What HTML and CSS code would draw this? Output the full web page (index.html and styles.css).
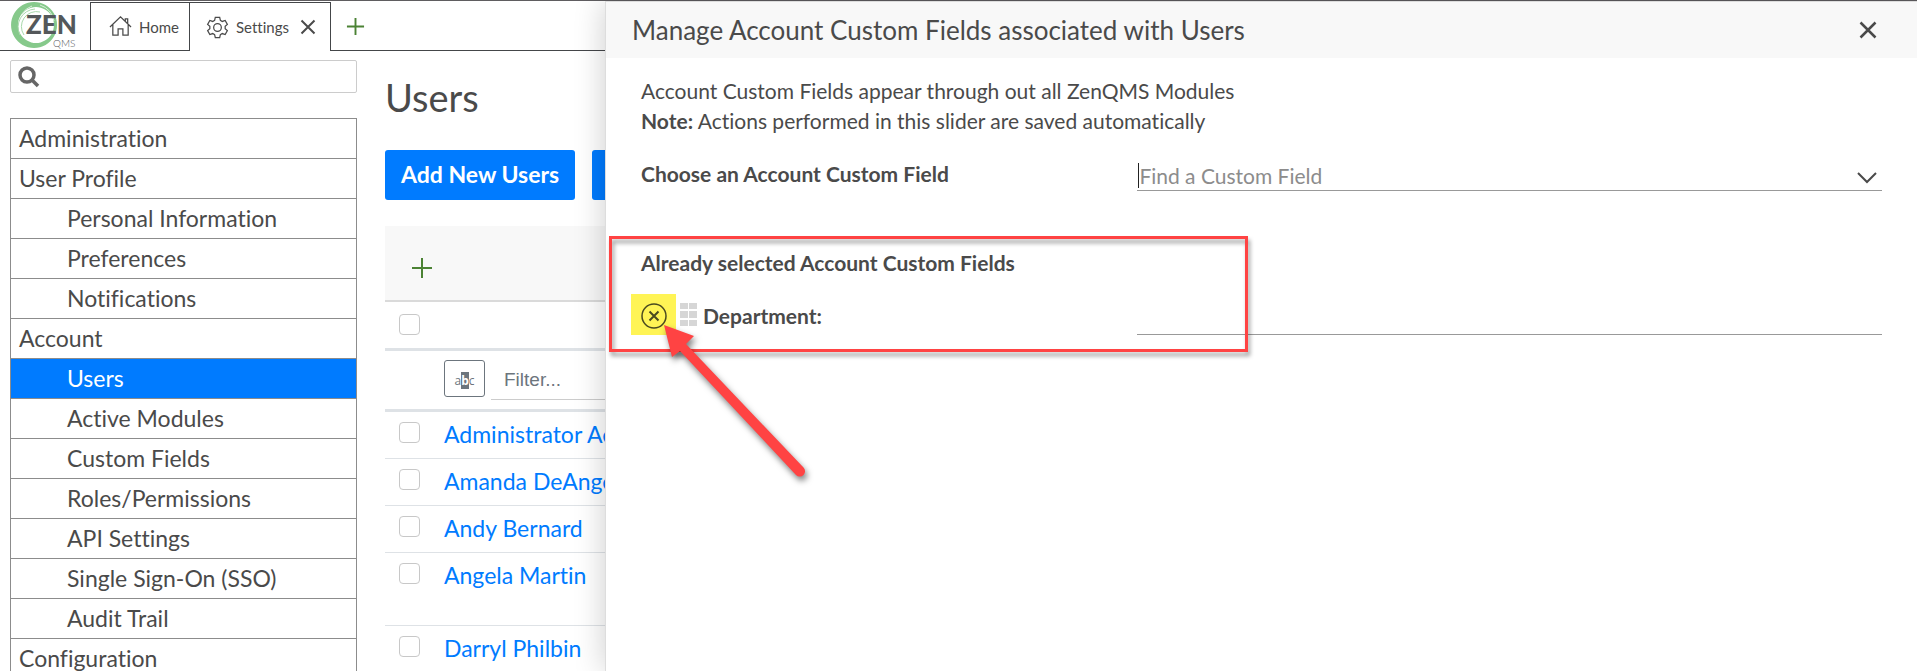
FILE: index.html
```
<!DOCTYPE html>
<html lang="en">
<head>
<meta charset="utf-8">
<title>ZenQMS - Users</title>
<link rel="stylesheet" href="styles.css">
</head>
<body>
<header class="topbar">
  <div class="brand">
    <svg class="logo" viewBox="0 0 68 49" role="img" aria-label="Zen QMS">
      <path fill="#86c98b" stroke="none" fill-rule="evenodd" d="M24 1a23 23 0 1 0 .1 0zM26 6a18 18 0 1 1-.1 0z"/>
      <path d="M10 34A18 18 0 0 1 25 8M14 34A15 15 0 0 1 30 11" fill="none" stroke="#a9d9ac" stroke-width="1"/>
      <path d="M30 4A21 21 0 0 1 44 20M12 13A19 19 0 0 1 22 5" fill="none" stroke="#d9efda" stroke-width="1"/>
      <text class="logo-zen" x="16" y="33">ZEN</text>
      <text class="logo-qms" x="43" y="46">QMS</text>
    </svg>
  </div>
  <nav class="tabs">
    <a class="tab" href="#home">
      <svg class="tab-icon" viewBox="0 0 24 24"><path d="M1 12.500 12 2l11 10.500M4 10v11h5.500v-6.500h5V21H20V10M17 6.500V4h2.500v5"/></svg>
      Home
    </a>
    <div class="tab tab-active">
      <svg class="tab-icon" viewBox="0 0 24 24"><circle cx="12" cy="12" r="4"/><path d="M9.700 1.500h4.600l.7 3 2 1.200 3-1 2.300 4-2.300 2.100v2.400l2.300 2.100-2.300 4-3-1-2 1.200-.7 3H9.700l-.7-3-2-1.200-3 1-2.300-4L4 13.200v-2.400L1.700 8.700l2.300-4 3 1 2-1.200z"/></svg>
      <span>Settings</span>
      <button class="icon-btn tab-close" aria-label="Close tab"><svg viewBox="0 0 16 16"><path d="M1.500 1.500l13 13M14.500 1.500l-13 13"/></svg></button>
    </div>
    <button class="icon-btn add-tab" aria-label="New tab"><svg viewBox="0 0 20 20"><path d="M10 1v18M1 10h18"/></svg></button>
  </nav>
</header>

<div class="layout">
  <aside class="sidebar">
    <label class="search">
      <svg viewBox="0 0 22 22"><circle cx="9" cy="9" r="7"/><path d="M14 14l6 6"/></svg>
      <input type="search" aria-label="Search">
    </label>
    <nav class="menu">
      <a href="#administration">Administration</a>
      <a href="#profile">User Profile</a>
      <a class="sub" href="#personal">Personal Information</a>
      <a class="sub" href="#preferences">Preferences</a>
      <a class="sub" href="#notifications">Notifications</a>
      <a href="#account">Account</a>
      <a class="sub current" href="#users">Users</a>
      <a class="sub" href="#modules">Active Modules</a>
      <a class="sub" href="#fields">Custom Fields</a>
      <a class="sub" href="#roles">Roles/Permissions</a>
      <a class="sub" href="#api">API Settings</a>
      <a class="sub" href="#sso">Single Sign-On (SSO)</a>
      <a class="sub" href="#audit">Audit Trail</a>
      <a href="#configuration">Configuration</a>
    </nav>
  </aside>

  <main class="content">
    <h1>Users</h1>
    <div class="actions">
      <button class="primary">Add New Users</button>
      <button class="primary" aria-label="More actions"></button>
    </div>
    <div class="toolbar">
      <button class="icon-btn add-row" aria-label="Add row"><svg viewBox="0 0 20 20"><path d="M10 0v20M0 10h20"/></svg></button>
    </div>
    <table class="users">
      <thead>
        <tr class="head-row"><th class="pick"><input type="checkbox" aria-label="Select all"></th><th></th></tr>
        <tr class="filter-row">
          <td></td>
          <td><div class="filter"><button class="match" aria-label="Match type">a<b>b</b>c</button><input type="text" placeholder="Filter..." aria-label="Filter by name"></div></td>
        </tr>
      </thead>
      <tbody>
        <tr><td class="pick"><input type="checkbox" aria-label="Select Administrator Account"></td><td><a href="#u1">Administrator Account</a></td></tr>
        <tr><td class="pick"><input type="checkbox" aria-label="Select Amanda DeAngelo"></td><td><a href="#u2">Amanda DeAngelo</a></td></tr>
        <tr><td class="pick"><input type="checkbox" aria-label="Select Andy Bernard"></td><td><a href="#u3">Andy Bernard</a></td></tr>
        <tr class="tall"><td class="pick"><input type="checkbox" aria-label="Select Angela Martin"></td><td><a href="#u4">Angela Martin</a></td></tr>
        <tr><td class="pick"><input type="checkbox" aria-label="Select Darryl Philbin"></td><td><a href="#u5">Darryl Philbin</a></td></tr>
      </tbody>
    </table>
  </main>
</div>

<section class="slider" role="dialog" aria-labelledby="slider-title">
  <header class="slider-head">
    <h2 id="slider-title">Manage Account Custom Fields associated with Users</h2>
    <button class="icon-btn slider-close" aria-label="Close"><svg viewBox="0 0 18 18"><path d="M1.500 1.500l15 15M16.500 1.500l-15 15"/></svg></button>
  </header>
  <div class="slider-body">
    <p class="intro">Account Custom Fields appear through out all ZenQMS Modules<br><b>Note:</b> Actions performed in this slider are saved automatically</p>
    <div class="field-row">
      <label for="find">Choose an Account Custom Field</label>
      <div class="combo">
        <span class="caret"></span>
        <input id="find" type="text" placeholder="Find a Custom Field">
        <button class="icon-btn chevron" aria-label="Show options"><svg viewBox="0 0 20 12"><path d="M1 1l9 9 9-9"/></svg></button>
      </div>
    </div>
    <h3>Already selected Account Custom Fields</h3>
    <div class="field-row selected">
      <div class="field-name">
        <button class="icon-btn remove" aria-label="Remove Department"><svg viewBox="0 0 26 26"><circle cx="13" cy="13" r="12"/><path d="M8.500 8.500l9 9M17.500 8.500l-9 9"/></svg></button>
        <svg class="grip" viewBox="0 0 17 23"><path d="M0 0h8v6H0zM9 0h8v6H9zM0 8h8v7H0zM9 8h8v7H9zM0 17h8v6H0zM9 17h8v6H9z"/></svg>
        <label for="dept">Department:</label>
      </div>
      <input id="dept" type="text">
    </div>
  </div>
  <div class="callout"></div>
  <svg class="arrow" viewBox="0 0 160 170"><path d="M10 10l30 11-8 8L149.500 152.500a5 5 0 0 1-7.500 7.500L26 36l-8 6z"/></svg>
</section>
</body>
</html>
```
FILE: styles.css
```
* { box-sizing: border-box; }
body {
  margin: 0;
  height: 100vh;
  overflow: hidden;
  position: relative;
  background: #fff;
  color: #4a4a4a;
  font: 23px/28px Lato, "Liberation Sans", sans-serif;
  font-variant-ligatures: no-common-ligatures;
}
h1, h2, h3, p { margin: 0; font-weight: 400; }
input, button { font: inherit; color: inherit; }
a { text-decoration: none; }
svg { display: block; fill: none; stroke: currentColor; }
.icon-btn { padding: 0; border: 0; background: none; }

.topbar { display: flex; height: 51px; border-top: 1px solid #5f5d60; }
.brand { width: 90px; padding-left: 10px; border-bottom: 1px solid #444649; }
.logo { width: 68px; height: 49px; }
.logo text { stroke: none; fill: #54585a; }
.logo-zen { font: 900 26px Lato, sans-serif; }
.logo-qms { font: 300 10px Lato, sans-serif; }
.tabs { flex: 1; display: flex; padding-top: 1px; }
.tab {
  display: flex;
  align-items: center;
  gap: 7px;
  padding: 0 10px 0 18px;
  border: 1px solid #444649;
  border-right: 0;
  color: inherit;
  font-size: 15px;
}
.tab-active { padding: 0 14px 0 16px; border-right: 1px solid #444649; border-bottom: 0; }
.tab-icon { width: 23px; height: 23px; stroke-width: 1.300; }
.tab-close { margin-left: 4px; }
.tab-close svg { width: 16px; height: 16px; stroke-width: 2; }
.add-tab { flex: 1; padding-left: 15px; border-bottom: 1px solid #444649; color: #4b8234; }
.add-tab svg { width: 19px; height: 19px; stroke-width: 2; }

.layout { display: grid; grid-template-columns: 347px 1fr; gap: 28px; padding: 9px 0 0 10px; }
.search {
  display: flex;
  align-items: center;
  height: 33px;
  margin-bottom: 25px;
  padding: 0 7px;
  border: 1px solid #ccc;
  border-radius: 2px;
}
.search svg { width: 22px; height: 22px; color: #666; stroke-width: 3.500; }
.search input { flex: 1; border: 0; outline: 0; background: none; }
.menu { border: 1px solid #8c8c8c; }
.menu a { display: block; height: 40px; padding: 5px 8px; border-bottom: 1px solid #8c8c8c; color: inherit; }
.menu .sub { padding-left: 56px; }
.menu .current { background: #007bff; color: #fff; }

.content { padding-top: 13px; }
h1 { font-size: 38px; line-height: 48px; }
.actions { display: flex; gap: 17px; margin: 29px 0 26px; }
.primary { min-width: 160px; height: 50px; padding: 0 16px 2px; border: 0; border-radius: 3px; background: #007bff; color: #fff; font-weight: 700; }
.toolbar { display: flex; height: 76px; padding: 32px 27px 0; background: #f8f8f8; border-bottom: 2px solid #dadada; }
.add-row { height: 20px; color: #4b8234; }
.add-row svg { width: 20px; height: 20px; stroke-width: 2; }
.users { width: 100%; border-collapse: separate; border-spacing: 0; }
.users th, .users td { padding: 8px 0 10px; border-bottom: 1px solid #dee2e6; text-align: left; vertical-align: top; }
.users .pick { width: 59px; padding-top: 10px; padding-left: 14px; }
.users .pick input {
  display: block;
  appearance: none;
  width: 21px;
  height: 21px;
  margin: 0;
  border: 1px solid #c8c8c8;
  border-radius: 4px;
  background: #fff;
}
.users a { display: block; color: #007bff; }
.users .head-row th { height: 49px; padding-top: 12px; border-bottom: 3px solid #dee2e6; }
.users .filter-row td { height: 61px; padding: 9px 0 0; border-bottom: 3px solid #dee2e6; }
.users .tall td { height: 73px; }
.filter { display: flex; gap: 6px; }
.match { width: 41px; height: 37px; padding: 4px 0 0; border: 1px solid #6c757d; border-radius: 3px; background: #fff; color: #6c757d; font: 12px/15px "Open Sans", sans-serif; }
.match b { background: #6c757d; color: #fff; }
.filter input { flex: 1; height: 40px; padding: 0 13px; border: 0; border-bottom: 1px solid #ccc; font: 19px "Liberation Sans", sans-serif; background: none; }
.filter input::placeholder { color: #6c757d; opacity: 1; }

.slider {
  position: absolute;
  top: 1px;
  right: 0;
  bottom: 0;
  width: calc(100% - 605px);
  background: #fff;
  border: solid #ddd;
  border-width: 1px 0 0 1px;
  box-shadow: 0 0 30px rgba(0, 0, 0, .2);
  font-size: 21px;
}
.slider-head { display: flex; justify-content: space-between; align-items: center; height: 56px; padding: 0 40px 0 26px; background: #f8f8f8; }
.slider-head h2 { font-size: 26px; line-height: 34px; }
.slider-close svg { width: 18px; height: 18px; stroke-width: 2.500; }
.slider-body { padding: 18px 35px; }
.intro { line-height: 30px; margin-bottom: 20px; }
.field-row { display: grid; grid-template-columns: 40% 60%; align-items: center; }
.field-row label, h3 { font-size: 21px; font-weight: 700; }
.combo { position: relative; display: flex; align-items: center; height: 35px; border-bottom: 1px solid #999; }
.combo input { flex: 1; height: 34px; padding: 5px 2px 0; border: 0; outline: 0; background: none; }
.combo input::placeholder { color: #8c8c8c; opacity: 1; }
.caret { position: absolute; left: 1px; top: 7px; width: 1px; height: 25px; background: #222; }
.chevron { padding: 10px 5px 0; }
.chevron svg { width: 20px; height: 12px; stroke-width: 2; }
h3 { margin: 58px 0 17px; }
.selected { height: 40px; }
.selected > input { align-self: stretch; border: 0; border-bottom: 1px solid #999; background: none; }
.field-name { display: flex; align-items: center; gap: 4px; margin-left: -10px; }
.remove { width: 45px; height: 41px; padding: 2px 10px 0; background: #fff455; color: #4a4a20; }
.remove svg { width: 26px; height: 26px; stroke-width: 1.500; }
.remove path { stroke-width: 2; }
.grip { width: 17px; height: 23px; fill: #d6d6d6; stroke: none; }
.field-name label { margin-left: 2px; padding-top: 3px; }
.callout {
  position: absolute;
  left: 3px;
  top: 234px;
  width: 639px;
  height: 116px;
  border: 3px solid #ff4343;
  filter: drop-shadow(2px 4px 2px rgba(0, 0, 0, .4));
}
.arrow {
  position: absolute;
  left: 48px;
  top: 313px;
  width: 160px;
  height: 170px;
  fill: #ff4343;
  stroke: none;
  filter: drop-shadow(2px 4px 3px rgba(0, 0, 0, .5));
}
```
